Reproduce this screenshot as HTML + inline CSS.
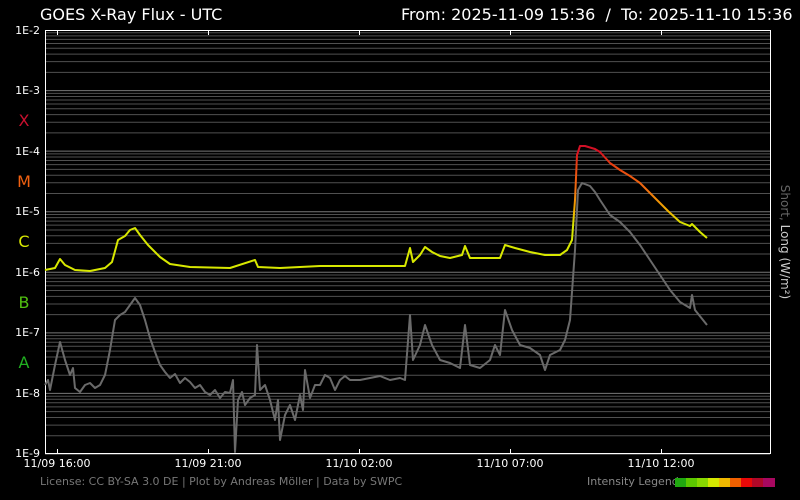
<!DOCTYPE html>
<html><head><meta charset="utf-8"><style>
html,body{margin:0;padding:0;background:#000;width:800px;height:500px;overflow:hidden}
svg text{font-family:"DejaVu Sans","Liberation Sans",sans-serif}
</style></head><body>
<svg width="800" height="500" viewBox="0 0 800 500" xmlns="http://www.w3.org/2000/svg">
<defs>
<g id="dec" stroke="#505050" stroke-width="1">
<line x1="45" x2="770" y1="2.77" y2="2.77"/><line x1="45" x2="770" y1="5.87" y2="5.87"/>
<line x1="45" x2="770" y1="9.38" y2="9.38"/><line x1="45" x2="770" y1="13.44" y2="13.44"/>
<line x1="45" x2="770" y1="18.23" y2="18.23"/><line x1="45" x2="770" y1="24.1" y2="24.1"/>
<line x1="45" x2="770" y1="31.67" y2="31.67"/><line x1="45" x2="770" y1="42.34" y2="42.34"/>
<line x1="45" x2="770" y1="60.57" y2="60.57" stroke="#777"/>
</g>
<linearGradient id="lg" gradientUnits="userSpaceOnUse" x1="0" y1="140" x2="0" y2="240">
<stop offset="0" stop-color="#c8102e"/><stop offset="0.12" stop-color="#d81020"/>
<stop offset="0.25" stop-color="#e84010"/><stop offset="0.5" stop-color="#f07010"/>
<stop offset="0.71" stop-color="#f0b000"/><stop offset="0.85" stop-color="#d8e800"/>
<stop offset="1" stop-color="#d8e800"/>
</linearGradient>
</defs>
<g transform="translate(0,30)"><use href="#dec"/></g>
<g transform="translate(0,90.57)"><use href="#dec"/></g>
<g transform="translate(0,151.14)"><use href="#dec"/></g>
<g transform="translate(0,211.71)"><use href="#dec"/></g>
<g transform="translate(0,272.28)"><use href="#dec"/></g>
<g transform="translate(0,332.85)"><use href="#dec"/></g>
<g transform="translate(0,393.42)"><use href="#dec"/></g>
<rect x="45.5" y="30.5" width="725" height="423" fill="none" stroke="#fff" stroke-width="1"/>
<g stroke="#fff">
<line x1="57.5" x2="57.5" y1="30" y2="35"/><line x1="208.5" x2="208.5" y1="30" y2="35"/><line x1="359.5" x2="359.5" y1="30" y2="35"/><line x1="510.5" x2="510.5" y1="30" y2="35"/><line x1="661.5" x2="661.5" y1="30" y2="35"/>
<line x1="57.5" x2="57.5" y1="449" y2="454"/><line x1="208.5" x2="208.5" y1="449" y2="454"/><line x1="359.5" x2="359.5" y1="449" y2="454"/><line x1="510.5" x2="510.5" y1="449" y2="454"/><line x1="661.5" x2="661.5" y1="449" y2="454"/>
</g>
<polyline fill="none" stroke="#6a6a6a" stroke-width="2" stroke-linejoin="round" points="45,385 48,380 50,390 55,365 60,342 65,360 70,375 73,368 75,388 80,392 85,385 90,383 95,388 100,385 105,375 110,350 115,320 120,315 125,312 130,305 135,298 140,305 145,320 150,338 155,352 160,365 165,372 170,378 175,374 180,383 185,378 190,382 195,388 200,385 205,392 210,395 215,390 220,398 225,392 230,393 233,380 235,452 238,400 242,392 245,405 250,398 255,395 257,345 260,390 265,385 270,400 275,420 278,400 280,440 285,415 290,405 295,420 300,395 303,410 305,370 310,398 315,385 320,385 325,375 330,378 335,390 340,380 345,376 350,380 360,380 370,378 380,376 390,380 400,378 405,380 410,315 413,360 420,345 425,325 432,345 440,360 450,363 460,368 465,325 470,365 480,368 490,360 495,345 500,355 505,310 512,330 520,345 530,348 540,355 545,370 550,355 560,350 565,340 570,320 575,250 578,190 582,183 590,186 595,192 600,200 610,215 620,222 630,232 640,245 650,260 660,275 670,290 680,302 690,308 692,295 695,310 707,325"/>
<polyline fill="none" stroke="url(#lg)" stroke-width="2" stroke-linejoin="round" points="45,270 55,268 60,259 65,265 75,270 90,271 105,268 112,262 118,240 125,236 130,230 135,228 140,235 148,245 160,257 170,264 190,267 230,268 255,260 258,267 280,268 320,266 360,266 405,266 410,248 413,262 420,255 425,247 432,252 440,256 450,258 462,255 465,246 470,258 500,258 505,245 515,248 530,252 545,255 560,255 567,250 572,240 575,200 577,155 580,146 585,146 595,149 600,152 610,163 620,170 630,176 640,183 650,193 660,203 668,211 680,222 690,226 692,224 700,232 707,238"/>
<g fill="#fff" font-size="11" text-anchor="end">
<text x="40" y="34">1E-2</text><text x="40" y="94">1E-3</text><text x="40" y="155">1E-4</text><text x="40" y="215">1E-5</text><text x="40" y="276">1E-6</text><text x="40" y="336">1E-7</text><text x="40" y="397">1E-8</text><text x="40" y="457">1E-9</text>
</g>
<g font-size="16" text-anchor="middle">
<text x="24" y="126" fill="#c8102e">X</text><text x="24" y="187" fill="#f06010">M</text><text x="24" y="247" fill="#d8e800">C</text><text x="24" y="308" fill="#50c010">B</text><text x="24" y="368" fill="#20b020">A</text>
</g>
<g fill="#fff" font-size="11" text-anchor="middle">
<text x="57" y="467">11/09 16:00</text><text x="208" y="467">11/09 21:00</text><text x="359" y="467">11/10 02:00</text><text x="510" y="467">11/10 07:00</text><text x="661" y="467">11/10 12:00</text>
</g>
<text x="40" y="20" fill="#fff" font-size="16">GOES X-Ray Flux - UTC</text>
<text x="401" y="20" fill="#fff" font-size="16" xml:space="preserve">From: 2025-11-09 15:36  /  To: 2025-11-10 15:36</text>
<text x="40" y="485" fill="#777" font-size="11">License: CC BY-SA 3.0 DE | Plot by Andreas Möller | Data by SWPC</text>
<text x="587" y="485" fill="#888" font-size="11">Intensity Legend</text>
<g>
<rect x="675" y="478" width="12" height="9" fill="#20a810"/><rect x="686" y="478" width="12" height="9" fill="#5cc800"/><rect x="697" y="478" width="12" height="9" fill="#88d800"/><rect x="708" y="478" width="12" height="9" fill="#d4e800"/><rect x="719" y="478" width="12" height="9" fill="#f0b800"/><rect x="730" y="478" width="12" height="9" fill="#f06000"/><rect x="741" y="478" width="12" height="9" fill="#e80808"/><rect x="752" y="478" width="12" height="9" fill="#b00828"/><rect x="763" y="478" width="12" height="9" fill="#a80860"/>
</g>
<text transform="translate(781,242) rotate(90)" font-size="12" text-anchor="middle"><tspan fill="#666">Short, </tspan><tspan fill="#ccc">Long (W/m²)</tspan></text>
</svg>
</body></html>
